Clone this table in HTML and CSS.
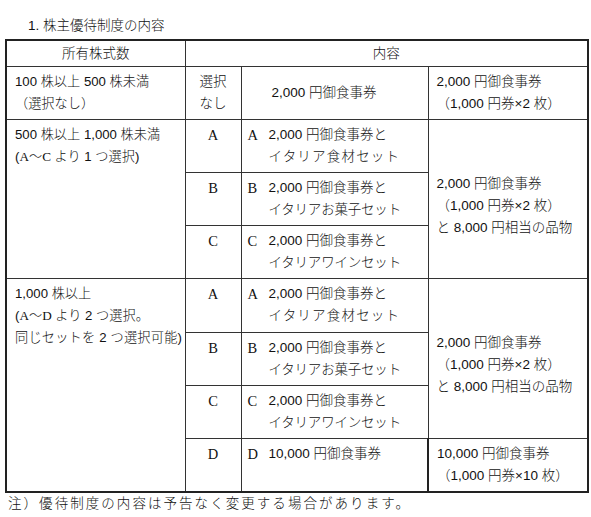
FILE: index.html
```html
<!DOCTYPE html>
<html lang="ja">
<head>
<meta charset="utf-8">
<link rel="stylesheet" href="styles.css">
</head>
<body>
<h1 class="title">1. 株主優待制度の内容</h1>
<table class="benefits">
  <colgroup>
    <col class="w1"><col class="w2"><col class="w3"><col class="w4">
  </colgroup>
  <tr>
    <th>所有株式数</th>
    <th colspan="3">内容</th>
  </tr>
  <tr>
    <td class="grp">100 株以上 500 株未満<br>（選択なし）</td>
    <td class="choice">選択<br>なし</td>
    <td class="single">2,000 円御食事券</td>
    <td class="gift">2,000 円御食事券<br>（1,000 円券×2 枚）</td>
  </tr>
  <tr>
    <td rowspan="3" class="grp">500 株以上 1,000 株未満<br>(<span class="l">A</span>～<span class="l">C</span> より 1 つ選択)</td>
    <td class="choice l">A</td>
    <td class="set"><div class="item"><span class="lab l">A</span><span>2,000 円御食事券と<br><span class="k9">イタリア食材セット</span></span></div></td>
    <td rowspan="3" class="gift span">2,000 円御食事券<br>（1,000 円券×2 枚）<br>と 8,000 円相当の品物</td>
  </tr>
  <tr>
    <td class="choice l">B</td>
    <td class="set"><div class="item"><span class="lab l">B</span><span>2,000 円御食事券と<br><span class="k10">イタリアお菓子セット</span></span></div></td>
  </tr>
  <tr>
    <td class="choice l">C</td>
    <td class="set"><div class="item"><span class="lab l">C</span><span>2,000 円御食事券と<br><span class="k10">イタリアワインセット</span></span></div></td>
  </tr>
  <tr class="tall">
    <td rowspan="4" class="grp">1,000 株以上<br>(<span class="l">A</span>～<span class="l">D</span> より 2 つ選択。<br><span class="wide">同じセットを 2 つ選択可能)</span></td>
    <td class="choice l">A</td>
    <td class="set"><div class="item"><span class="lab l">A</span><span>2,000 円御食事券と<br><span class="k9">イタリア食材セット</span></span></div></td>
    <td rowspan="3" class="gift span">2,000 円御食事券<br>（1,000 円券×2 枚）<br>と 8,000 円相当の品物</td>
  </tr>
  <tr>
    <td class="choice l">B</td>
    <td class="set"><div class="item"><span class="lab l">B</span><span>2,000 円御食事券と<br><span class="k10">イタリアお菓子セット</span></span></div></td>
  </tr>
  <tr>
    <td class="choice l">C</td>
    <td class="set"><div class="item"><span class="lab l">C</span><span>2,000 円御食事券と<br><span class="k10">イタリアワインセット</span></span></div></td>
  </tr>
  <tr>
    <td class="choice l">D</td>
    <td class="set"><div class="item"><span class="lab l">D</span><span>10,000 円御食事券</span></div></td>
    <td class="gift last">10,000 円御食事券<br>（1,000 円券×10 枚）</td>
  </tr>
</table>
<p class="note">注）優待制度の内容は予告なく変更する場合があります。</p>
</body>
</html>
```
FILE: styles.css
```css
html, body {
  background: #ffffff;
}
body {
  margin: 0;
  padding: 14px 0 0 5px;
  font-family: "Liberation Sans", "Noto Sans CJK JP", sans-serif;
  font-size: 13.5px;
  font-weight: 300;
  color: #111;
}
.l {
  font-family: "Liberation Serif", "Noto Sans CJK JP", serif;
}
.title {
  margin: 0 0 2px 23px;
  font-size: 13.5px;
  font-weight: 300;
  line-height: 23px;
}
.benefits {
  border-collapse: collapse;
  table-layout: fixed;
  width: 582px;
  border: 2px solid #222;
}
.w1 { width: 179px; }
.w2 { width: 56px; }
.w3 { width: 187px; }
.w4 { width: 160px; }
.benefits th,
.benefits td {
  border: 1px solid #333;
  line-height: 22px;
  padding: 4px 7px 4px 7px;
  vertical-align: top;
  text-align: left;
  font-weight: 300;
  white-space: nowrap;
}
.benefits th {
  text-align: center;
  padding: 0;
  line-height: 25px;
}
.benefits tr.tall td {
  padding-bottom: 5px;
}
.benefits td.grp {
  font-size: 13.2px;
  padding-left: 8px;
  padding-right: 0;
}
.wide {
  letter-spacing: 0.2px;
}
.benefits td.choice {
  text-align: center;
  padding-left: 2px;
  padding-right: 2px;
}
.benefits td.choice.l,
.lab {
  font-size: 14.5px;
}
.benefits td.single {
  vertical-align: middle;
  padding-left: 30px;
}
.benefits td.set {
  padding-left: 6px;
  padding-right: 2px;
}
.item {
  display: flex;
}
.lab {
  width: 21px;
  flex: none;
}
.k9 {
  letter-spacing: 1.2px;
}
.k10 {
  letter-spacing: -0.2px;
}
.benefits td.gift {
  padding-left: 8px;
  padding-right: 2px;
}
.benefits td.span {
  vertical-align: middle;
  padding-top: 18px;
  padding-bottom: 4px;
}
.benefits td.last {
  border-left: 2px solid #222;
}
.note {
  margin: 1px 0 0 3px;
  line-height: 20px;
  letter-spacing: 2.05px;
}
```
